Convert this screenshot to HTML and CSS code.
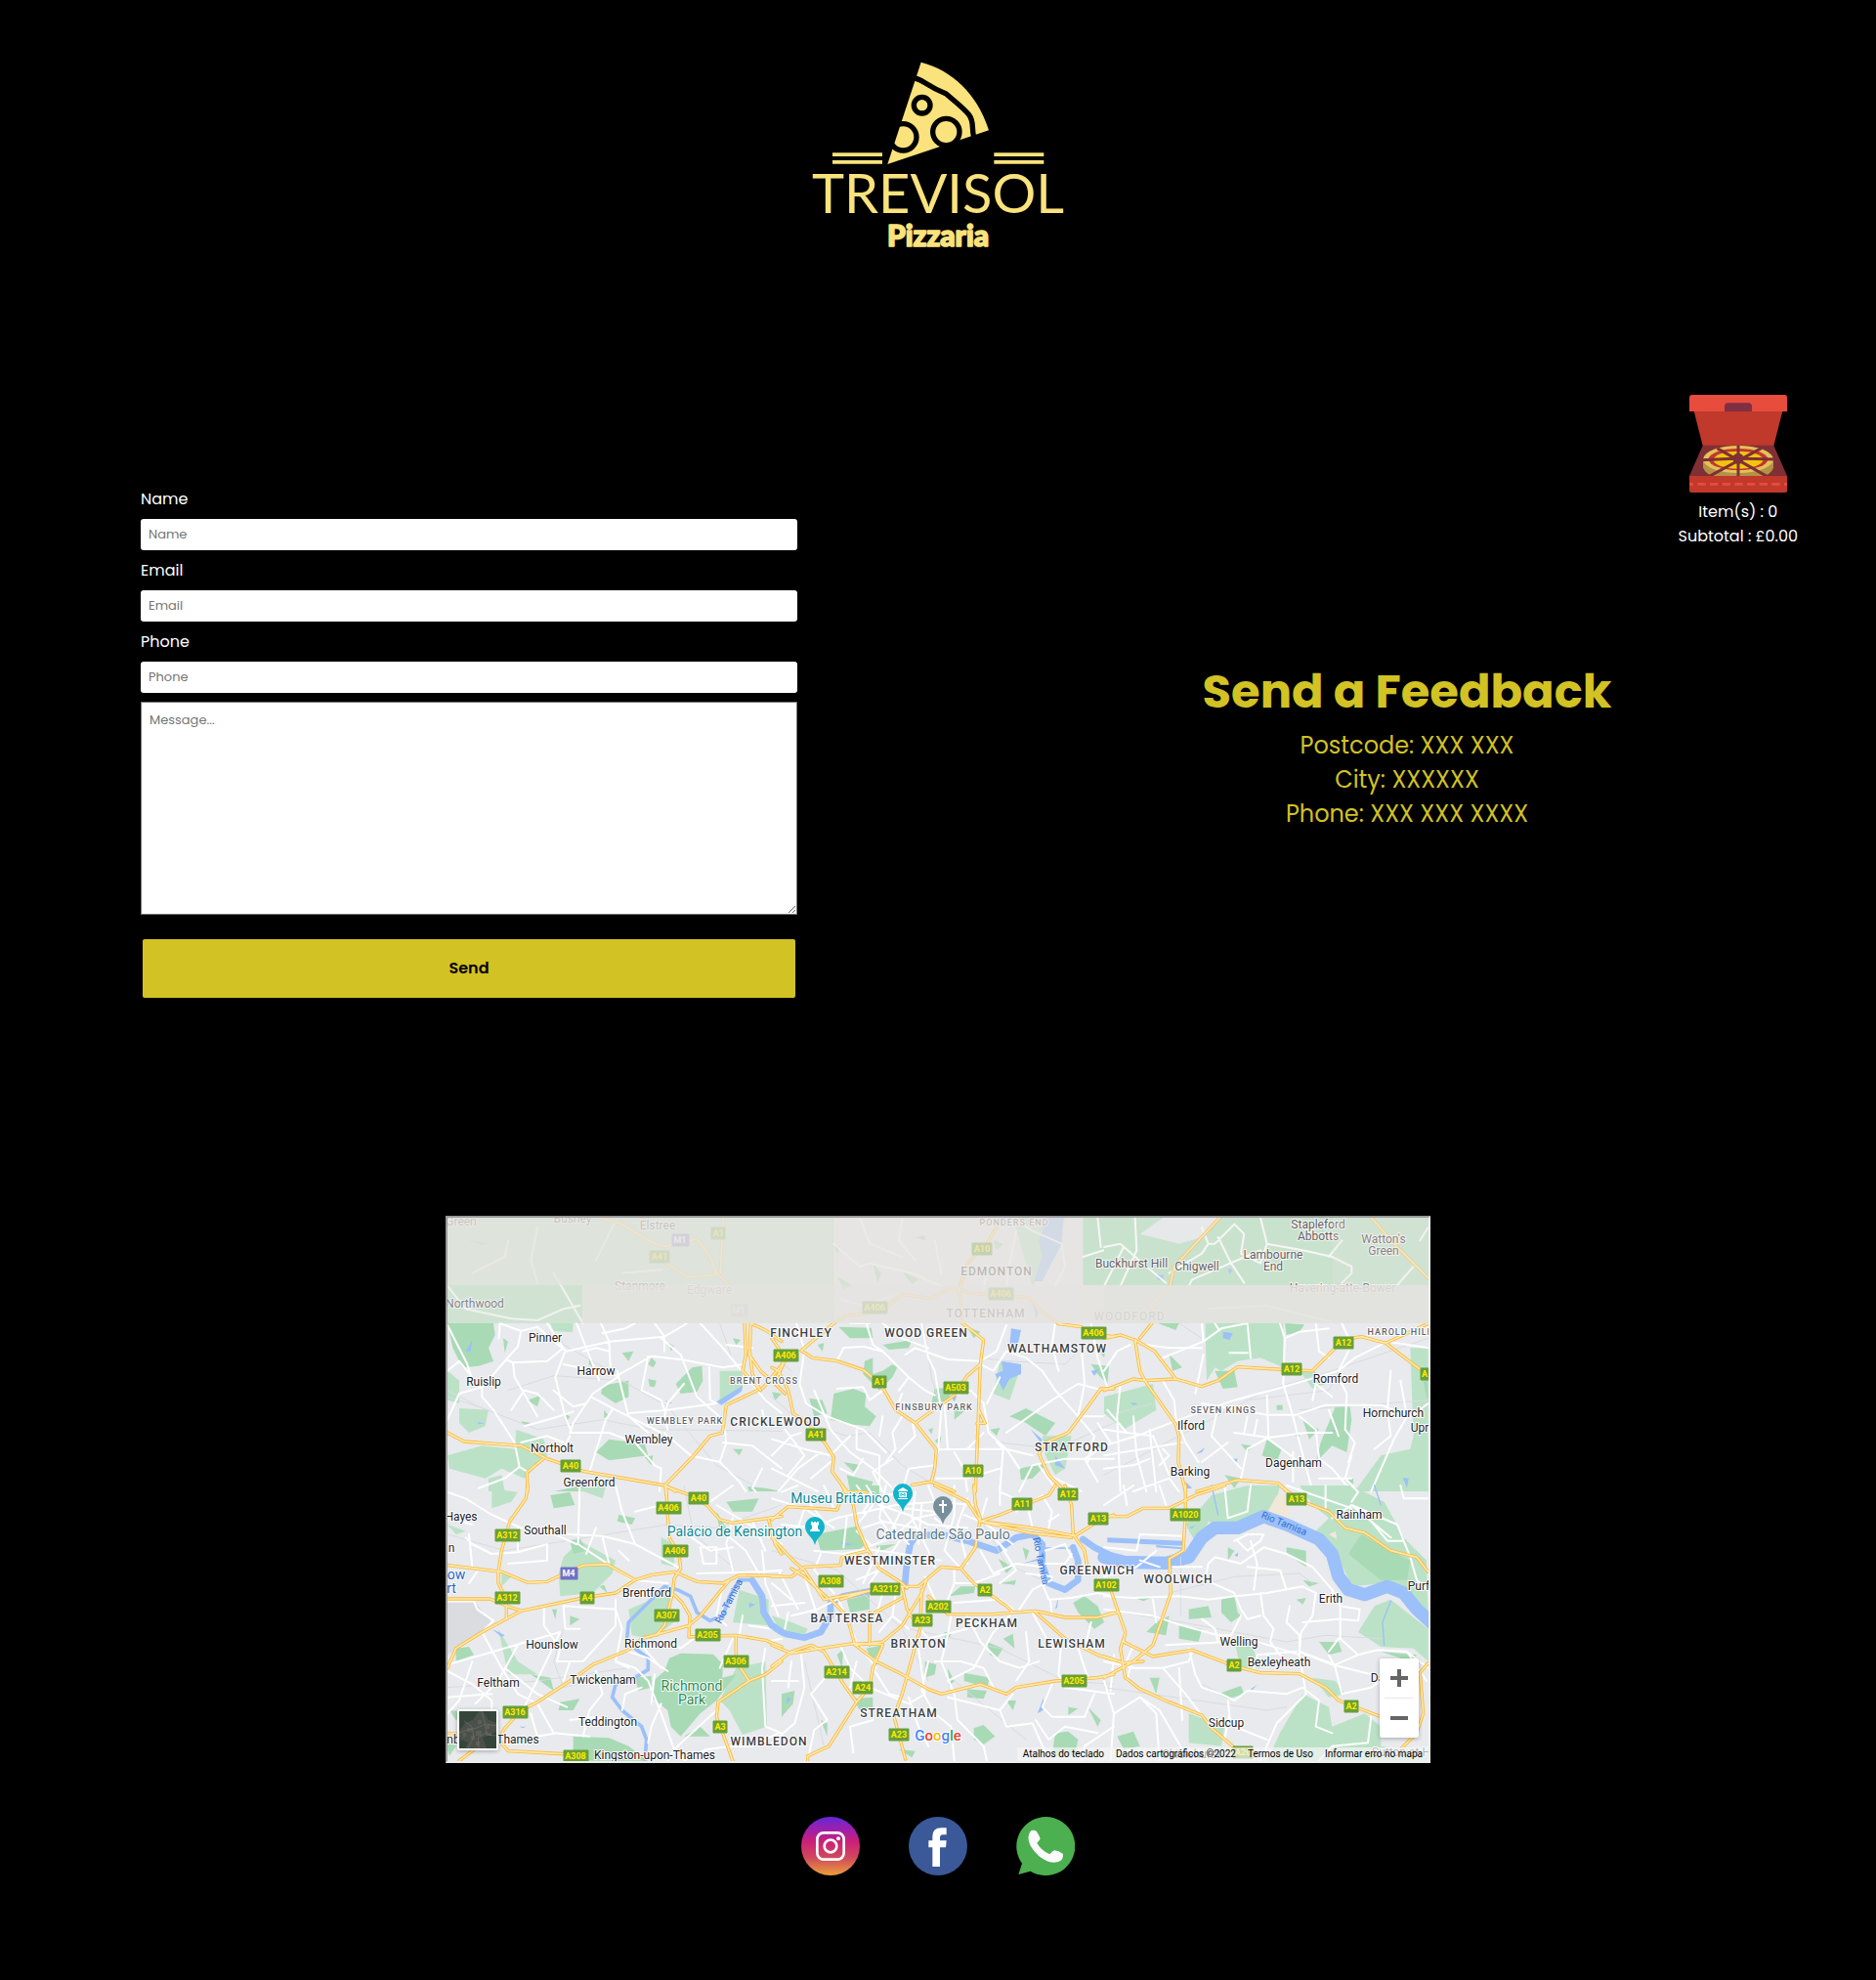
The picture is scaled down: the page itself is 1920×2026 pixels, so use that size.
FILE: index.html
```html
<!DOCTYPE html>
<html lang="en">
<head>
<meta charset="utf-8">
<meta name="viewport" content="width=device-width, initial-scale=1">
<title>Trevisol Pizzaria</title>
<link rel="stylesheet" href="styles.css">
</head>
<body>
<header class="header">
  <a href="#" class="logo-link" aria-label="Trevisol Pizzaria">
    <svg class="logo" viewBox="90 66 780 582">
      <path d="M428 71C520 95 600 165 636 280L325 384Z"/>
      <g class="logo-cut">
        <path d="M408 120C430 122 445 145 505 168C530 190 555 208 575 232C592 255 582 270 590 302"/>
        <circle cx="431" cy="203" r="25"/>
        <circle cx="505" cy="285" r="41"/>
        <circle cx="373" cy="301" r="41"/>
      </g>
      <path d="M156 349h153v11H156zM156 372h153v11H156zM652 349h153v11H652zM652 372h153v11H652z"/>
      <text class="logo-name" x="480" y="534">TREVISOL</text>
      <text class="logo-sub" x="480" y="635">Pizzaria</text>
    </svg>
  </a>
</header>

<main>
  <section class="contact">
    <form class="form">
      <label for="name">Name</label>
      <input id="name" type="text" placeholder="Name">
      <label for="email">Email</label>
      <input id="email" type="email" placeholder="Email">
      <label for="phone">Phone</label>
      <input id="phone" type="tel" placeholder="Phone">
      <textarea aria-label="Message" placeholder="Message..."></textarea>
      <button class="send" type="submit">Send</button>
    </form>
    <div class="feedback">
      <h1>Send a Feedback</h1>
      <p>Postcode: XXX XXX</p>
      <p>City: XXXXXX</p>
      <p>Phone: XXX XXX XXXX</p>
    </div>
    <aside class="cart">
      <svg class="cart-icon" viewBox="117 72 300 300" aria-hidden="true">
        <path fill="#c0392b" d="M131 122H403L376 228H158Z"/>
        <path fill="#e74c3c" d="M117 123V80q0-8 8-8H409q8 0 8 8V123Z"/>
        <path fill="#7f2f42" d="M225 123V108q0-11 11-11H298q11 0 11 11V123Z"/>
        <path fill="#802f34" d="M158 227H376L417 321H117Z"/>
        <path fill="#b39245" d="M159 268V295Q165 312 185 321H350Q370 312 375 295V268Z"/>
        <ellipse fill="#e5c05c" cx="267" cy="270" rx="108" ry="42"/>
        <ellipse fill="#c0392b" cx="267" cy="270" rx="91" ry="33"/>
        <ellipse fill="#f1c40f" cx="267" cy="272" rx="76" ry="27"/>
        <path stroke="#802f34" stroke-width="9" d="M267 227V321M155 272L267 267 380 270M202 236L355 322M338 236L178 322"/>
        <circle fill="#802f34" cx="267" cy="268" r="17"/>
        <path fill="#c0392b" d="M117 321H417V366q0 6-6 6H123q-6 0-6-6Z"/>
        <path stroke="#e74c3c" stroke-width="8" stroke-dasharray="25 13" stroke-dashoffset="13" d="M117 346H417"/>
      </svg>
      <p>Item(s) : 0</p>
      <p>Subtotal : £0.00</p>
    </aside>
  </section>

  <section class="map" aria-label="Map">
    <svg class="map-canvas" viewBox="458 1246 1004 556">
      <defs>
        <g id="trunk">
          <path transform="translate(450 1236) scale(.33333)" d="M24 690L75 717 250 730 330 770 440 808 693 852 725 870M318 770L268 812 270 870M936 354L940 450 930 500 985 560M955 354L952 440 960 510 985 560M955 354L1000 375 1050 410M975 560L880 605 868 690 830 700 780 760 693 850 695 880M950 450L985 500 1030 540 1060 570M1060 470L990 555M490 30L560 50 650 105 690 118 790 95 830 150 850 200 890 240M870 30L862 200M690 165L760 212 850 205"/>
          <path transform="translate(790 1236) scale(.33333)" d="M190 354L230 330 330 320 400 265 490 278 540 250 575 250 610 262 790 275 830 320 880 356 950 365M690 60L660 110 600 170 575 250 585 354 650 405 640 480 625 870M635 620L655 660 630 662M190 354L90 438 125 460 200 470 280 497 320 530 345 560 380 620 440 660 505 742 500 800 490 840 430 850M640 480L600 515 560 575 440 660M0 490L20 500 50 560 65 630 120 670 165 725 190 765 185 810 230 870M0 400L20 430 35 480 10 530M490 840L560 870M1050 555L1010 555 970 610 910 690 840 720 820 755 850 820 900 870M1000 390L1050 395"/>
          <path transform="translate(1130 1236) scale(.33333)" d="M0 400L50 390 95 405 110 500 125 530 220 665 230 700 228 780 250 870M95 405L155 440 220 525 300 548 350 530 410 488 580 498 640 500 700 440 730 405 790 395 865 415 995 355M865 415L995 515M0 560L90 525 125 530 220 525M110 400L150 350 145 295 200 250 215 180 355 30M820 30L900 120 995 215M285 870L410 835 535 845 560 870"/>
          <path transform="translate(450 1520) scale(.33333)" d="M24 245L190 265 270 298 330 295 440 245 515 242 600 290 650 275 720 265 790 295 870 300 920 275 1050 278M270 0L265 40 215 110 190 200 180 265 180 300 205 350 205 405M24 348H155L205 370 250 385M24 560L50 500 130 450 250 385 440 345 540 330 600 290M695 0L700 90 705 160 735 210 740 255 720 285 715 330 690 430 665 460M700 5L770 30 820 60 860 105 900 115 1010 100 1050 95M1010 105L1030 180 1050 210M720 335L745 360 768 400 765 465 820 462 910 460 1000 475 1050 495M890 290L800 400 765 430 620 470 580 505 470 550 400 600 300 665 250 690 200 745 180 780 210 815 400 825M910 460V540L950 600M1050 540L1000 580 950 600 855 665 850 710 880 790 900 845M24 760L120 770M60 845L120 800"/>
          <path transform="translate(790 1520) scale(.33333)" d="M0 105L50 65 200 75 220 20 290 20M215 0L250 60 260 120 290 190 330 255 400 300 415 315M0 160L70 235 100 260 160 350 290 325 400 310 450 310 520 250 580 255 625 190 640 100 625 60 620 0M0 280L60 280 100 250 210 245 215 220 295 200M60 255L100 280 170 345M210 350L310 320M180 350L230 400 255 490 340 480 400 430 460 330 475 290M400 310L415 380 445 430M460 320L455 440 430 530 400 640 375 710 410 840M300 400L400 345M300 390V490M0 490L60 515 150 500 250 485 340 488M0 555L60 510 120 490 160 510 190 560 220 610 260 665 175 800 110 830 110 845M250 485L320 540 400 580 480 625 520 640 640 610 720 640 750 620 870 600 1000 590 1050 580M340 490L310 560 300 620 260 665M580 255L620 300 720 370 740 390M480 340L540 395 680 395 810 385 900 405 1000 405 1050 390M810 390L900 470 1000 520 1050 535M500 0L600 50 640 110 800 130 930 155 1010 105 1050 90M640 110L700 90 850 30 870 0M900 0L920 60 925 150 960 200 970 260M640 110L790 145 920 160"/>
          <path transform="translate(1130 1520) scale(.33333)" d="M250 0V80L243 200 200 225 205 330 150 490 90 540 0 590M0 95L70 95 120 70 200 70 280 30 370 0M540 0L600 45 690 80 740 130 800 145 880 200 960 220 995 265M20 320L65 450 60 480 150 525 270 505 400 555 480 575 600 578 680 620 720 660 845 708M60 470L50 500 65 590 110 625 200 665 300 705 330 745 400 805M0 400L40 390M0 525L60 545 120 540M995 545L970 575 980 700 960 760 910 810"/>
        </g>
      </defs>
      <rect x="458" y="1246" width="1004" height="556" fill="#e8eaed"/>

      <g transform="translate(450 1236) scale(.33333)">
        <path class="park-light" d="M24 30H1050V354H24ZM24 500L60 530 60 600 24 590ZM60 615L150 620 140 670 90 690 60 660ZM235 680L320 710 330 760 260 830 190 800 140 830 30 800 24 760 130 730 230 740ZM860 500L930 500 930 560 860 590ZM150 830L190 820 200 870H150ZM340 354L410 354 408 382 350 378Z"/>
        <path class="park" d="M24 354H165L170 390 150 430 165 470 120 485 70 490 40 430ZM500 545L580 530 580 580 540 600 495 570ZM775 490L805 485 808 530 790 565 740 570 725 540ZM520 710L630 725 640 760 520 775 480 750ZM560 445L595 440 580 470ZM650 460L665 475 655 490 640 480ZM270 590L310 575 300 610ZM350 870L450 850 440 870ZM900 740L930 740 920 760ZM900 400L925 405 910 420ZM1020 565L1050 570 1030 590ZM250 655L280 660 260 668ZM460 455L470 490 458 480ZM505 620L520 640 505 645ZM945 855L1000 860 1050 870 950 870ZM630 765L655 760 650 790ZM380 630L400 640 390 655ZM195 400L210 410 200 445ZM640 525L665 530 660 550 645 548ZM705 415L720 425 710 440Z"/>
        <path class="water" d="M100 405L95 440 80 440ZM850 595L930 545 925 565 865 605ZM115 658L140 660 120 664ZM690 590L715 600 705 600ZM80 95L150 110 130 115Z"/>
        <path class="rail" d="M24 580L120 610 300 680 500 650 650 680 1050 685M210 560L350 515 560 530 700 610 850 790 960 850M330 354L380 420 540 510M860 354L900 470M24 560L140 620"/>
        <path class="road" d="M24 360L85 480 95 510M24 500L60 470 100 520M24 650L60 570 130 550 205 465 240 425 250 378 185 354 182 400M130 550L130 580 165 620 230 720 245 795 270 810M250 378L300 365 350 410 390 440 520 410 690 395 660 354M205 465L225 475 330 470 380 430 330 354M225 475L230 520 300 640M260 670L350 645 410 625M385 440L355 520 385 640 405 690M420 354L470 480 490 530M495 354L520 410 525 500M380 480L545 515 650 455 740 465 870 490 930 480M545 500L560 560 580 640 640 690M545 520L470 570 410 660 400 690 520 690 600 720 660 790 680 800 675 870M465 580L540 620 680 690M680 400L740 450 790 580 870 650M580 630L700 620 850 600 830 590 828 490M460 810L510 650 530 620M800 354L870 430 1000 590 1050 630M870 640L880 720 860 780 920 840 940 870M870 720L960 730 1050 800M24 240L80 310 220 340 300 345 380 310 430 300M350 200L440 354M120 860L200 830 245 795M100 200L200 150 210 100M300 60L280 160 300 230M480 160L540 40M560 200L680 190M690 690L770 760 860 780M640 455L620 560 680 590 690 620M380 740L400 700M350 560L410 610 450 600M990 620L1000 660M350 620L300 570 260 560 220 620M990 800L960 860 970 870M750 540L700 600 690 640 700 680M880 420L960 430M440 440L480 430 520 440M600 354L570 370 500 385M760 354L690 395 690 440M250 720L330 700 380 720"/>
      </g>

      <g transform="translate(790 1236) scale(.33333)">
        <path class="park-light" d="M0 30H190V354H0ZM955 30H1050V237H955ZM700 470L760 500 730 590 680 570ZM830 700L920 700 900 800 870 820 840 760ZM740 30L900 30 880 100 800 240Z"/>
        <path class="park" d="M205 365L305 368 310 400 240 400ZM190 570L250 555 290 570 285 610 320 640 300 670 250 665 180 650ZM115 585L155 590 170 630 130 640ZM285 470L310 460 310 510 340 500 370 480 385 490 370 520 330 560 280 510ZM340 420L430 405 420 430 360 435ZM500 555L560 550 540 590 490 600ZM560 610L595 620 560 650ZM780 615L870 660 840 700 780 660 730 640ZM760 800L850 780 800 830 765 835ZM230 820L310 840 300 870 240 870ZM600 365L640 380 620 400ZM980 480L1035 485 1030 540 1000 510ZM190 110L210 120 200 140ZM310 170L335 200 325 230ZM440 90L470 85 470 100ZM680 100L710 110 690 130ZM220 780L275 790 250 810ZM140 420L160 415 155 440ZM480 680L495 675 490 695ZM200 210L250 240 220 250ZM670 680L700 675 690 700ZM1000 430L1025 430 1020 460ZM400 195L450 220 430 235ZM500 715L520 700 515 730ZM1000 730L1010 720 1010 745Z"/>
        <path class="water" d="M735 370L765 375 755 420 730 420ZM705 470L765 480 765 510 730 525 710 560 685 510 710 500ZM845 30L895 30 890 110 830 225 805 225 830 150 820 100ZM980 500L1005 495 990 515ZM550 580L568 575 560 595ZM795 680L830 710 825 720ZM870 760L900 800 870 790ZM800 290L820 320 810 345Z"/>
        <path class="rail" d="M0 580L80 650 230 700 300 690 400 790 530 870M465 354L490 520 520 620M640 460L720 470 900 480 960 420M700 720L870 740 1050 660M0 450L60 500"/>
        <path class="road" d="M75 354L100 435 85 540 105 600 170 640 280 680 350 750M200 470L220 430 280 425 340 440 420 520 470 560 500 575M290 354L310 420 340 440M460 354L480 460 500 500 520 620 510 750M410 450L440 430 540 465 640 470 690 440 720 360M240 354L300 354M340 354L400 400 480 430M130 560L180 680 240 750 310 800 380 870M0 710L100 740 180 760 240 700M0 800L100 850 140 870M505 742L620 740 720 740 800 760M530 600L540 740M560 575L610 560 650 600 665 690 720 740 760 800M640 480L680 500 720 440 780 460 830 500 870 560 940 640 990 700 970 780M660 600L700 520M720 690L860 590 940 540 1020 560M870 354L860 420 880 500M950 420L960 540 940 640M400 570L380 620M420 520L390 560M340 560L300 590 280 550 200 555M700 870L710 740 690 720M760 870L800 790 900 770 1050 770M850 820L950 870M870 860L820 790M600 870L590 800 560 750M190 110L270 180 300 170 430 200 520 240M270 30L300 110 400 150M400 30L390 100 440 160M210 280L280 300 370 270M740 30L800 70 890 110M890 110L900 180 870 240M1000 30L1010 120M750 70L730 170 720 240M955 150L1050 120M660 200L650 250M940 640L1020 640 1050 620M280 770L250 820 210 800M340 870L310 810 370 770M430 650L440 700 390 750M650 690L600 740M340 640L330 700M980 354L1000 460 1030 550M40 680L100 760 50 820M120 830L180 780M520 200L500 100M1000 660L1040 720 960 770 1000 840M0 760L60 700 90 690M20 870L80 800 150 750M260 680L260 740 330 760 330 870M400 870L420 800 500 790M505 830L600 830 700 800M400 640L370 690 380 740 350 780"/>
      </g>

      <g transform="translate(1130 1236) scale(.33333)">
        <path class="park-light" d="M0 30H1000V354H0ZM310 354H550V490L480 460 410 470 360 500 340 490 315 530ZM940 430L995 430V870H770L850 760 940 740 950 700ZM0 580L150 540 160 620 60 680 0 630ZM600 500L640 495 680 540 640 555Z"/>
        <path class="built" d="M180 30L360 30 300 90 230 110 150 90 110 80Z"/>
        <path class="park" d="M165 354H230L220 375ZM555 354L615 358 600 380 560 390ZM710 610L755 610 760 650 745 750 700 730 650 780 665 720ZM610 650L660 680 630 710ZM500 710L545 740 530 780 485 760ZM340 500L400 500 410 550 365 555ZM530 605H548V620H530ZM580 695L600 690 600 705ZM740 830L765 830 765 850ZM420 725L455 730 440 750ZM200 450L240 490 210 500ZM370 820L420 830 400 860ZM970 490L995 490V600Z"/>
        <path class="water" d="M365 380L395 385 385 405 365 400ZM282 755L310 735 300 750ZM395 770L410 770 405 785ZM160 205L182 205 182 220 165 222ZM380 185L395 190 385 205ZM918 828L935 830 930 860ZM700 680L720 685 705 688ZM80 598L105 600 90 606ZM250 840L270 860 255 862Z"/>
        <path class="rail" d="M230 354L300 400M0 820L230 700 500 560 700 500 995 400M440 590L690 560 720 500M0 640L150 600M600 620L995 590"/>
        <path class="road" d="M0 500L40 440 80 420M300 354L305 410 180 460M305 410L360 370 440 354 450 460M125 420L200 430 300 430M305 450L280 570M385 445H440M540 354L555 400 550 540 580 640 600 720 640 870M555 400L600 380 690 370M650 354L660 440 690 460M730 354L760 420 720 500M0 730L100 700 230 650 400 590 550 550 720 500 770 460 870 410 995 430M180 530L215 590 220 640M220 640L250 720 290 780M500 575L505 710 600 780M400 690L505 705 620 690 700 690M350 610L330 700 420 800M300 600L500 635 590 635 680 605 850 605 940 640M720 520L745 570 740 680 770 720 750 780M880 500L870 620 880 700 830 740M940 640L995 600M910 530L930 640 890 710 820 870M600 640L650 680 660 770 700 800 760 870M420 830L440 740 505 705M580 750L580 840M10 620L70 690 150 700 200 820M50 540L40 640 50 870M90 640L100 760 130 870M140 680L160 870M0 760L240 720M180 740L200 760 170 790M90 870L200 830 230 870M340 354L350 370M50 240L100 130 95 30M0 240L60 120M0 120L50 110 130 180 190 230M200 200L300 140 320 110 340 110 400 50M320 110L300 60M350 90L390 170 430 230M400 50L430 80 420 140 480 170 500 110 610 130 700 150 760 180 760 200 730 230M690 150L730 100M500 110L480 30M260 240L270 220 480 130M900 237L950 180M970 100L995 60M320 310L500 300 700 350M690 620L720 700M660 830L760 830M640 590L650 540 700 580M760 760L740 830 780 870M300 780L380 720M440 640L430 690M470 650L460 700M0 680L70 690M0 800L90 790 140 770"/>
      </g>

      <g transform="translate(450 1520) scale(.33333)">
        <path class="park-light" d="M160 10L240 20 220 50 160 70ZM420 10L510 0 500 40ZM430 170L540 230 530 270 470 330 370 340 365 270 380 220ZM580 380L700 330 720 420 650 470 590 460ZM910 560L1000 540 1005 740 930 765 890 690 860 660ZM920 320L1010 350 1010 430 900 420ZM180 440L240 540 300 580 210 580ZM24 120L80 140 50 150ZM680 160L720 180 720 250 680 240ZM190 270L220 280 190 310Z"/>
        <path class="park" d="M705 530L740 515 840 518 870 550 868 590 910 580 850 660 800 700 740 770 710 740 700 690 650 650 655 600 690 570ZM410 770L520 775 580 800 640 845H410ZM50 500L90 495 105 520 50 540ZM370 665L430 655 410 690 365 690ZM550 90L600 100 590 120 545 110ZM880 50L980 40 960 80 900 80ZM340 30L400 20 415 60 350 70ZM600 590L650 585 650 620 610 630ZM30 690L90 695 50 720ZM750 770L800 740 830 770ZM400 170L430 160 450 200 410 210ZM400 400L430 410 400 430ZM280 580L340 590 350 630ZM490 310L505 305 515 330ZM345 380L360 380 355 410ZM10 770L50 800 30 830ZM850 80L880 130 860 140Z"/>
        <path class="river" d="M575 470L580 420 640 360 690 310 730 320 770 340 790 390 830 415 870 400 890 340 920 290 960 290M600 500L640 530 640 565 600 590 540 610 530 650 560 690 620 740 635 780 630 845"/>
        <path class="river wide" d="M960 292L990 340 995 390 1020 430 1050 450"/>
        <path class="water" d="M160 440L200 460 190 465ZM950 360L970 365 950 375ZM245 740L265 740 255 745Z"/>
        <path class="airport" d="M24 360H110L160 420 100 470 24 520Z"/>
        <path class="rail" d="M24 150L200 200 450 160 700 120 850 130 1050 60M24 620L300 600 580 560M380 440L350 540 380 620 500 590M750 0L780 150 900 250"/>
        <path class="road" d="M24 20L80 40 160 90 250 130 400 150 500 155 600 180 740 255M90 150L100 250M80 160L100 180 160 210 240 205 330 180 330 230 210 240M430 0L425 180 500 230 590 290M420 180L330 140M500 160L520 240M540 0L560 80 600 180M24 355H105L115 380 165 415 130 450M115 265L90 300M130 450L190 560 240 640 300 670 350 760 460 770M24 550L130 520 370 450M24 570L100 610 160 660 160 700M110 670L180 600 240 490M320 370L320 430 370 500 360 540 440 540 540 430 540 350M370 450L260 680M200 560L300 640 390 680M380 370L385 440 430 440M380 370L540 380 560 440 540 540 580 560M580 510L640 530 700 570M540 540L600 560 640 600 680 700 720 810 700 845M720 810L850 690M500 640L480 570M500 640L460 690 440 770M610 480L680 560M620 620L570 640 560 690M400 720L480 710 560 740M680 670L650 740 640 790M660 580L650 670M830 50L900 0M850 60L1050 180M800 190H850V240H810ZM790 270L990 265 1050 260M990 200L1000 300 1040 400M930 400L920 460M950 430L1050 445M900 470L860 560M1000 500L990 560 1000 740 1050 760M870 300L850 400 880 430M24 650L160 640M280 700L300 770 290 790M300 770L360 760M100 540L60 660 24 700M780 470L740 500 700 480M590 290L700 300M450 210L480 130M880 150L940 200 980 270M600 80L680 60M24 100L100 120M240 130V200M380 600L400 540M1000 480L1050 470M900 800L820 810 750 845M1040 760L960 800 900 800M550 200L580 230M760 150L830 200 900 190M900 100L880 180 900 260M960 110L1000 200"/>
      </g>

      <g transform="translate(790 1520) scale(.33333)">
        <path class="park-light" d="M0 400L60 420 110 440 100 460 30 460Z"/>
        <path class="park" d="M135 150L260 125 290 180 270 195 150 200ZM230 350L300 335 300 380 240 390ZM470 540L505 550 500 580 470 590ZM925 360L960 340 1000 370 1020 420 990 440 940 390ZM600 625L660 630 650 655 600 650ZM695 225L740 250 720 270ZM660 480L710 500 690 530 670 520ZM710 470L740 455 745 500ZM290 500L340 490 310 540ZM620 745L650 735 685 770 650 795 620 780ZM870 760L910 755 940 780 930 830 860 830ZM30 640L70 630 65 670 30 710ZM545 340L580 310 625 310 620 330ZM200 520L220 500 215 560ZM530 450L555 450 530 490ZM150 720L170 730 170 770ZM390 810L440 815 430 835ZM590 575L670 590 660 620 590 600ZM540 560L560 600 545 615ZM970 680L1010 720 1000 740ZM700 300L750 290 745 305ZM770 190L790 200 780 230ZM320 185L380 180 330 205ZM240 0L330 0 330 30 290 20ZM200 20L225 0ZM910 680L940 685 910 705ZM250 655L310 650 310 690 270 690ZM720 660L750 660 740 690Z"/>
        <path class="river wide" d="M0 430L40 455 100 467 150 450 180 400 180 360 220 340 300 325M408 310L415 230 425 180 440 155 520 150 600 170 690 200 750 160 800 150 830 180 830 240 850 300 900 320 940 290 940 230 925 190"/>
        <path class="river wide" d="M955 165L990 190 1050 220"/>
        <path class="water" d="M60 655L45 650 45 670ZM205 175L250 180 230 185ZM820 190H920V194H820ZM770 240L830 220V228ZM880 340L870 380 876 375ZM815 700L835 650 832 690Z"/>
        <path class="rail" d="M0 200L200 260 400 440 480 600M420 440L700 500 900 600 1050 610M100 540L160 800M650 120L720 240 830 290M560 600L780 780"/>
        <path class="road" d="M0 40L100 70 190 130M30 120L120 130 200 100 290 80 380 60 500 50 620 60M130 200L220 210 290 195 400 210 520 230M20 260L60 340 80 380M160 0L190 70M290 0L330 60 420 90 480 120 600 130M350 0L330 100 370 160M400 70L370 130 420 180M440 20L430 100 480 200 500 250M560 0L560 90 530 200 580 255M280 130L340 110 440 130M310 30L380 130M290 190L370 160 440 100 540 80M460 60L450 180M600 40L570 120 600 240M400 160L350 230 300 300M640 200L680 270 750 240 830 250M700 180L750 260 700 300M660 120L740 180M700 60L700 0M750 80L830 30 860 80 850 130M780 40L800 130M840 240L900 240 920 210M840 200L900 180 920 220M780 270L860 280M830 300L850 350 920 345 1000 330 1050 340M855 350L860 400M730 400L680 450 620 560 540 600M540 350L560 300 620 300 700 270M470 280L500 350 550 400 540 460 520 540 560 640 570 720 650 800 660 845M740 380L700 350 560 360M780 450L790 540 750 600M890 470L880 580 900 620 1050 640M800 390L860 500M500 540L580 540 650 560 680 620M480 540L460 630 500 700 550 740 560 845M450 500L470 640M540 650L620 670 700 690 740 640M700 690L720 740 800 730 840 820M810 720L850 780 900 740 1000 760M860 610L830 680 860 710 960 710 990 640M1050 520L1040 630M1050 740L960 800 950 845M100 280L140 400M0 300L60 350M150 210L130 260 190 330M60 400L140 380 200 350M0 370L100 360M50 390L40 440M200 340L260 480 320 560M90 520L100 620 70 730 0 790M60 540L50 620M190 560L120 640 170 720 130 750 110 845M210 490L240 560 300 620M260 540L240 620M310 560L360 640 400 650M300 620L420 670 470 640M310 720L240 740 250 820M420 650L450 740 480 800M260 290L330 260M330 190L280 300M160 110L120 60M230 100L220 190M260 140L300 180M80 600L0 600M420 400L480 470 600 440M600 400L640 480 700 540 760 560 820 540M340 330L320 400M380 330L370 400 330 450M370 400L420 440M980 420L960 500M560 260L560 300M100 70L80 130M500 100L540 130M590 90L640 110M660 40L640 110M880 90L850 110M940 500L970 590M30 20L80 0M760 380L800 320 860 290M260 0L300 50 280 80M380 0L400 70 500 80M310 60L270 110M480 0L500 50M340 30L440 20M700 20L770 50M670 150L720 200"/>
      </g>

      <g transform="translate(1130 1520) scale(.33333)">
        <path class="park-light" d="M250 120L330 30 440 0H540L520 90 400 140 320 110 290 190ZM600 0H760L860 50 920 160 990 230 995 410 860 300 760 310 720 220 680 160 640 150 690 100 640 60ZM830 370L880 350 995 440V540L950 500 850 495 780 450ZM610 640L690 680 700 740 800 700 850 740V800L995 820V845H500L540 760ZM640 590L710 600 740 640 690 650ZM260 700L370 740 360 800 260 790ZM400 480L450 480 480 560 420 560Z"/>
        <path fill="#f1e8d9" d="M530 30L560 30 570 100 500 85ZM690 150L710 140 715 165Z"/>
        <path class="park" d="M790 150L860 190 940 230 930 290 850 290 750 210ZM560 190L620 200 620 250 560 210ZM360 350L400 340 410 390 420 400 390 420 360 390ZM260 380L320 370 330 405 260 410ZM160 420L200 400 190 460 130 450ZM230 430L300 440 290 480 230 470ZM95 345L145 345 120 355ZM350 640L420 615 430 640 380 655ZM40 770L90 755 110 800 60 810ZM610 290L660 300 630 310ZM660 480L720 480 730 510 690 520ZM60 240L100 220 80 250ZM380 190L400 200 380 230ZM140 590L170 590 160 640ZM590 350L620 345 610 365ZM850 510L960 520 940 540Z"/>
        <path class="river broad" d="M0 220L60 235 190 238 260 220 300 160 340 130 410 130 490 95 560 120 660 165 700 210 720 280 750 320 800 335 870 310 920 330 960 380 1010 425"/>
        <path class="river thin" d="M880 355L855 420 860 490M830 0L850 60M330 0L350 90"/>
        <path class="water" d="M10 160L240 170V185L10 175ZM160 183L240 190V196L160 190ZM400 215L412 205 410 218ZM450 625L470 612 455 628ZM260 130L280 122 270 132Z"/>
        <path class="rail" d="M235 220V400M0 380L240 420 560 480 680 460 850 470M200 330L400 280 600 270 640 300M0 620L500 690 560 680M300 610L400 660"/>
        <path class="road" d="M0 340L90 345 230 340 320 350 400 340 500 330 610 310 650 330M320 240L340 220 420 240 490 190 560 210 640 250 700 320 725 370 725 470 780 520 840 505 930 510 995 560M320 240L310 290 400 330 420 380 440 410 480 400M400 170L440 150 490 150 480 170 440 200 410 170M450 170L470 240 460 320M440 250L540 260 560 320M0 280L100 250 160 200M0 190L100 200 110 150 240 155M0 60L90 0M60 0L70 60M170 0L190 60M370 0L380 100 440 80 450 0M0 380L150 400 240 430 350 460 390 460 420 400M300 410L340 440 350 480M570 370L560 420 600 460 600 530M650 330L640 400 605 450 600 510 700 550 820 580M610 420L720 410 780 415 785 380 725 370M460 560L470 520 590 510M480 330L490 400 520 440 510 480 540 520M400 480L440 470 600 520 620 640 530 730 480 845M0 600L30 700 20 845M30 700L110 650 170 690 240 810M110 650L160 700 170 845M70 600L80 560 180 560 260 540 270 510M180 560L250 640 330 745M260 500L280 580 300 620 360 640 400 660 440 630 560 640 610 620 660 660 650 740 700 760M370 780L385 700 380 660M385 710L400 740 500 780M190 490L380 480M690 520L710 560 730 640 820 620 850 600M780 520L710 550 600 510M720 470L690 510M820 710L810 790 700 800 660 845M930 510L990 600M760 0L780 20 760 50M700 100L760 60 900 120 940 220M760 60L880 160M680 0L680 70M820 110L870 170 920 170M910 0L920 40H995M940 220L960 290 995 320M560 0L760 70M100 560L0 540M230 560L240 720M170 250L110 230M210 250L300 250M150 350L160 420M90 490L60 560"/>
      </g>

      <use class="trunk-case" href="#trunk"/>
      <use class="trunk-core" href="#trunk"/>

      <g class="shields">
        <path d="M574 1494h20v12h-20zM665 1280h20v12h-20zM728 1256h14v12h-14zM995 1272h20v12h-20zM1012 1318h25v12h-25zM883 1332h25v12h-25zM792 1381h25v12h-25zM893 1408h14v12h-14zM966 1414h25v12h-25zM1107 1358h25v12h-25zM825 1462h20v12h-20zM986 1499h20v12h-20zM1365 1368h20v12h-20zM1312 1395h20v12h-20zM1454 1400h20v12h-20zM705 1527h20v12h-20zM672 1537h25v12h-25zM679 1581h25v12h-25zM507 1565h25v12h-25zM507 1629h25v12h-25zM594 1629h14v12h-14zM670 1647h25v12h-25zM712 1667h25v12h-25zM741 1694h25v12h-25zM515 1746h25v12h-25zM730 1761h14v12h-14zM577 1791h25v12h-25z"/>
        <path d="M1036 1533h20v12h-20zM1083 1523h20v12h-20zM1114 1548h20v12h-20zM838 1612h25v12h-25zM891 1620h30v12h-30zM1001 1621h14v12h-14zM948 1638h25v12h-25zM934 1652h20v12h-20zM1120 1616h25v12h-25zM844 1705h25v12h-25zM873 1721h20v12h-20zM1087 1714h25v12h-25zM910 1769h20v12h-20zM1317 1528h20v12h-20zM1198 1544h30v12h-30zM1256 1698h14v12h-14zM1376 1740h14v12h-14zM1262 1787h20v12h-20z"/>
        <path class="motorway" d="M688 1263h17v12h-17zM748 1335h17v12h-17zM574 1604h17v12h-17z"/>
        <text x="584" y="1503">A40</text><text x="675" y="1289">A41</text><text x="735" y="1265">A1</text><text x="1005" y="1281">A10</text><text x="1024" y="1327">A406</text><text x="895" y="1341">A406</text><text x="804" y="1390">A406</text><text x="900" y="1417">A1</text><text x="978" y="1423">A503</text><text x="1119" y="1367">A406</text><text x="835" y="1471">A41</text><text x="996" y="1508">A10</text><text x="1375" y="1377">A12</text><text x="1322" y="1404">A12</text><text x="1458" y="1409">A</text>
        <text x="715" y="1536">A40</text><text x="684" y="1546">A406</text><text x="691" y="1590">A406</text><text x="519" y="1574">A312</text><text x="519" y="1638">A312</text><text x="601" y="1638">A4</text><text x="682" y="1656">A307</text><text x="724" y="1676">A205</text><text x="753" y="1703">A306</text><text x="527" y="1755">A316</text><text x="737" y="1770">A3</text><text x="589" y="1800">A308</text>
        <text x="1046" y="1542">A11</text><text x="1093" y="1532">A12</text><text x="1124" y="1557">A13</text><text x="850" y="1621">A308</text><text x="906" y="1629">A3212</text><text x="1008" y="1630">A2</text><text x="960" y="1647">A202</text><text x="944" y="1661">A23</text><text x="1132" y="1625">A102</text><text x="856" y="1714">A214</text><text x="883" y="1730">A24</text><text x="1099" y="1723">A205</text><text x="920" y="1778">A23</text><text x="1327" y="1537">A13</text><text x="1213" y="1553">A1020</text><text x="1263" y="1707">A2</text><text x="1383" y="1749">A2</text><text x="1272" y="1796">A20</text>
        <g class="on-motorway"><text x="696" y="1272">M1</text><text x="756" y="1344">M1</text><text x="582" y="1613">M4</text></g>
      </g>

      <g class="town">
        <text x="472" y="1254">Green</text><text x="586" y="1251">Bushey</text><text x="673" y="1258">Elstree</text><text x="655" y="1320">Stanmore</text><text x="726" y="1324">Edgware</text><text x="486" y="1338">Northwood</text><text x="558" y="1373">Pinner</text><text x="610" y="1407">Harrow</text><text x="495" y="1418">Ruislip</text><text x="664" y="1477">Wembley</text><text x="565" y="1486">Northolt</text><text x="603" y="1521">Greenford</text>
        <text x="1158" y="1297">Buckhurst Hill</text><text x="1225" y="1300">Chigwell</text><text x="1349" y="1257">Stapleford</text><text x="1349" y="1269">Abbotts</text><text x="1303" y="1288">Lambourne</text><text x="1303" y="1300">End</text><text x="1416" y="1272">Watton's</text><text x="1416" y="1284">Green</text><text x="1374" y="1322">Havering-atte-Bower</text><text x="1367" y="1415">Romford</text><text x="1426" y="1450">Hornchurch</text><text x="1453" y="1465">Upr</text><text x="1219" y="1463">Ilford</text><text x="1324" y="1501">Dagenham</text><text x="1218" y="1510">Barking</text>
        <text x="472" y="1556">Hayes</text><text x="462" y="1588">n</text><text x="558" y="1570">Southall</text><text x="662" y="1634">Brentford</text><text x="565" y="1687">Hounslow</text><text x="666" y="1686">Richmond</text><text x="510" y="1726">Feltham</text><text x="617" y="1723">Twickenham</text><text x="622" y="1766">Teddington</text><text x="530" y="1784">Thames</text><text x="464" y="1784">nb</text><text x="670" y="1800">Kingston-upon-Thames</text>
        <text x="1391" y="1554">Rainham</text><text x="1452" y="1627">Purf</text><text x="1362" y="1640">Erith</text><text x="1268" y="1684">Welling</text><text x="1309" y="1705">Bexleyheath</text><text x="1410" y="1721">Da</text><text x="1255" y="1767">Sidcup</text><text x="1219" y="1799">Chislehurst</text><text x="1434" y="1797">Sutton at H</text>
      </g>
      <g class="district">
        <text x="1020" y="1305">EDMONTON</text><text x="1009" y="1348">TOTTENHAM</text><text x="1156" y="1351">WOODFORD</text><text x="820" y="1368">FINCHLEY</text><text x="948" y="1368">WOOD GREEN</text><text x="1082" y="1384">WALTHAMSTOW</text><text x="794" y="1459">CRICKLEWOOD</text><text x="1097" y="1485">STRATFORD</text><text x="787" y="1786">WIMBLEDON</text><text x="911" y="1601">WESTMINSTER</text><text x="867" y="1660">BATTERSEA</text><text x="1010" y="1665">PECKHAM</text><text x="940" y="1686">BRIXTON</text><text x="1097" y="1686">LEWISHAM</text><text x="920" y="1757">STREATHAM</text><text x="1123" y="1611">GREENWICH</text><text x="1206" y="1620">WOOLWICH</text>
      </g>
      <g class="district suburb">
        <text x="1038" y="1254">PONDERS END</text><text x="701" y="1457">WEMBLEY PARK</text><text x="782" y="1416">BRENT CROSS</text><text x="956" y="1443">FINSBURY PARK</text><text x="1252" y="1446">SEVEN KINGS</text><text x="1433" y="1366">HAROLD HILL</text>
      </g>
      <g class="place">
        <text x="860" y="1538" fill="#0b8793">Museu Britânico</text><text x="752" y="1572" fill="#0b8793">Palácio de Kensington</text><text x="965" y="1575" fill="#5b7583">Catedral de São Paulo</text>
        <text x="708" y="1730" fill="#2b8a4f">Richmond</text><text x="708" y="1744" fill="#2b8a4f">Park</text>
        <text x="467" y="1616" fill="#2463c7">ow</text><text x="462" y="1630" fill="#2463c7">rt</text>
      </g>
      <g class="stream">
        <text transform="translate(749 1640) rotate(-63)">Rio Tamisa</text><text transform="translate(1062 1598) rotate(78)">Rio Tamisa</text><text transform="translate(1313 1562) rotate(22)">Rio Tamisa</text>
      </g>
      <g class="pins">
        <path fill="#12b5cb" d="M924 1547C922 1538 914 1536 914 1528A10 10 0 0 1 934 1528C934 1536 926 1538 924 1547ZM834 1581C832 1572 824 1570 824 1562A10 10 0 0 1 844 1562C844 1570 836 1572 834 1581Z"/>
        <path fill="#78909c" d="M965 1560C963 1551 955 1549 955 1541A10 10 0 0 1 975 1541C975 1549 967 1551 965 1560Z"/>
        <path fill="#fff" d="M924 1522L929 1525V1526H919V1525ZM920 1527H928V1532H920ZM919 1533H929V1534H919ZM830 1557H832V1558H833V1557H835V1558H836V1557H838V1560L837 1561V1564L839 1566V1567H829V1566L831 1564V1561L830 1560ZM964 1535H966V1539H969V1541H966V1548H964V1541H961V1539H964Z"/>
        <path fill="none" stroke="#12b5cb" d="M922 1531V1528L924 1530 926 1528V1531"/>
      </g>
      <g fill="#e5e3df">
        <path opacity=".84" d="M458 1246H852V1315H458Z"/>
        <path opacity=".74" d="M852 1246H1108V1315H852Z"/>
        <path opacity=".32" d="M1108 1246H1364V1315H1108Z"/>
        <path opacity=".5" d="M1364 1246H1462V1315H1364ZM458 1315H596V1354H458Z"/>
        <path opacity=".95" d="M596 1315H852V1354H596Z"/>
        <path opacity=".85" d="M852 1315H1108V1354H852Z"/>
        <path opacity=".92" d="M1108 1315H1462V1354H1108Z"/>
      </g>
      <text class="google" x="960" y="1781"><tspan fill="#4285f4">G</tspan><tspan fill="#ea4335">o</tspan><tspan fill="#fbbc04">o</tspan><tspan fill="#4285f4">g</tspan><tspan fill="#34a853">l</tspan><tspan fill="#ea4335">e</tspan></text>
    </svg>
    <button class="satellite" type="button" aria-label="Satellite view">
      <svg viewBox="0 0 38 38">
        <rect width="38" height="38" fill="#4b514a"/>
        <path fill="#35453a" d="M0 0H20L14 9 6 12 0 20ZM24 0H38V12L30 9ZM0 28L9 32 6 38H0ZM24 27L38 21V38H28Z"/>
        <path fill="#5c5d54" d="M8 17H13V21H8ZM17 20H23V25H17ZM27 14H31V18H27ZM12 25H16V29H12ZM4 22H7V26H4ZM19 9H23V13H19ZM28 22H33V25H28ZM17 31H21V35H17Z"/>
        <path fill="none" stroke="#74736a" stroke-width=".6" d="M0 22L9 19 18 17 27 13 38 15M23 0L26 11 28 24 38 25M9 38L15 26 13 16 5 10M20 38L19 27 29 21"/>
      </svg>
    </button>
    <div class="zoom">
      <button type="button" aria-label="Zoom in"><svg viewBox="0 0 18 18"><path d="M7 0h4v7h7v4h-7v7H7v-7H0V7h7z"/></svg></button>
      <button type="button" aria-label="Zoom out"><svg viewBox="0 0 18 18"><path d="M0 7h18v4H0z"/></svg></button>
    </div>
    <nav class="credits" aria-label="Map information">
      <a href="#">Atalhos do teclado</a>
      <a href="#">Dados cartográficos ©2022</a>
      <a href="#">Termos de Uso</a>
      <a href="#">Informar erro no mapa</a>
    </nav>
  </section>
</main>

<footer class="social">
  <a href="#" aria-label="Instagram">
    <svg viewBox="60 57 180 180">
      <defs><linearGradient id="sunset" x1="0" y1="0" x2="0" y2="1"><stop offset="0" stop-color="#6228d7"/><stop offset=".2" stop-color="#9a20ae"/><stop offset=".42" stop-color="#cb1f78"/><stop offset=".7" stop-color="#d04a5c"/><stop offset="1" stop-color="#eba03a"/></linearGradient></defs>
      <circle cx="150" cy="147" r="90" fill="url(#sunset)"/>
      <g fill="none" stroke="#fff" stroke-width="8"><rect x="109" y="106" width="82" height="82" rx="20"/><circle cx="150" cy="147" r="19"/></g>
      <circle cx="174" cy="124" r="6" fill="#fff"/>
    </svg>
  </a>
  <a href="#" aria-label="Facebook">
    <svg viewBox="390 57 180 180">
      <circle cx="480" cy="147" r="90" fill="#3b5998"/>
      <path fill="#fff" d="M463 210V151H451V130H463V117Q463 91 490 91H506V112H495Q486 112 486 121V130H506L504 151H486V210Z"/>
    </svg>
  </a>
  <a href="#" aria-label="WhatsApp">
    <svg viewBox="720 57 180 180">
      <path fill="#4caf50" d="M727 234L738 200A90 90 0 1 1 764 224Z"/>
      <path fill="#fafafa" d="M766 99Q776 96 782 101Q790 112 794 124Q793 130 784 137Q794 158 823 172Q832 162 837 160Q850 161 864 171Q865 184 858 191Q840 202 818 194Q785 181 764 146Q750 116 766 99Z"/>
    </svg>
  </a>
</footer>
</body>
</html>
```
FILE: styles.css
```css
* {
  box-sizing: border-box;
  margin: 0;
  padding: 0;
}

body {
  background: #000;
  color: #fff;
  font-family: Poppins, Inter, sans-serif;
  font-size: 16px;
}

svg {
  display: block;
}

/* Header */
.header {
  display: flex;
  justify-content: center;
  padding: 62px 16px 148px;
}

.logo {
  width: 260px;
  height: 194px;
  fill: #fae27c;
}

.logo-cut {
  fill: none;
  stroke: #000;
  stroke-width: 16px;
}

.logo-name,
.logo-sub {
  font-family: Lato, sans-serif;
  text-anchor: middle;
}

.logo-name {
  font-size: 168px;
}

.logo-sub {
  font-size: 90px;
  font-weight: 900;
  stroke: #fae27c;
  stroke-width: 5px;
  stroke-linejoin: round;
}

/* Contact */
.contact {
  display: grid;
  grid-template-columns: 1fr 1fr;
}

.form {
  grid-area: 1 / 1;
  justify-self: center;
  width: 70%;
  padding-top: 95px;
  display: flex;
  flex-direction: column;
}

.form label {
  line-height: 24px;
  margin-bottom: 8px;
}

.form input {
  height: 32px;
  margin-bottom: 9px;
  padding: 0 8px;
  border: 0;
  border-radius: 3px;
  background: #fff;
  font: 13px Poppins, Inter, sans-serif;
}

.form textarea {
  height: 218px;
  padding: 8px;
  border: 1px solid #767676;
  background: #fff;
  font: 13px Poppins, Inter, sans-serif;
  resize: vertical;
}

.form ::placeholder {
  color: #757575;
}

.send {
  height: 60px;
  margin: 25px 2px 0;
  padding-bottom: 2px;
  border: 0;
  border-radius: 2px;
  background: #d2c224;
  color: #000;
  font: 600 16px Poppins, Inter, sans-serif;
}

.feedback {
  grid-area: 1 / 2;
  align-self: center;
  padding-top: 96px;
  color: #d2c224;
  text-align: center;
  font-size: 24px;
  line-height: 35px;
}

.feedback h1 {
  font-size: 48px;
  line-height: 74px;
}

.cart {
  grid-area: 1 / 2;
  place-self: start end;
  margin-right: 80px;
  text-align: center;
  line-height: 25px;
}

.cart-icon {
  width: 100px;
  height: 100px;
  margin: 0 auto 7px;
}

/* Map */
.map {
  position: relative;
  width: 52.5%;
  margin: 223px auto 0;
  border: 2px inset #eee;
}

.map-canvas {
  width: 100%;
  font-family: Roboto, sans-serif;
  text-anchor: middle;
}

.park { fill: #a8dab5; }
.park-light { fill: #bbe2c6; }
.built { fill: #e8eaed; }
.airport { fill: #dadce0; }
.water { fill: #9cc0f9; }

.river,
.rail,
.road,
.trunk-case,
.trunk-core {
  fill: none;
  stroke-linejoin: round;
  stroke-linecap: round;
}

.river { stroke: #9cc0f9; stroke-width: 11px; }
.river.thin { stroke-width: 4px; }
.river.wide { stroke-width: 20px; }
.river.broad { stroke-width: 40px; }
.rail { stroke: #d9dbe0; stroke-width: 3px; }
.road { stroke: #fff; stroke-width: 6px; }
.trunk-case { stroke: #f9b93b; stroke-width: 10px; }
.trunk-core { stroke: #ffe9ae; stroke-width: 5px; }

.shields path {
  fill: #689f38;
  stroke: #689f38;
  stroke-linejoin: round;
}

.shields .motorway {
  fill: #7070c8;
  stroke: #7070c8;
}

.shields text {
  fill: #ffeb00;
  font-size: 9px;
  font-weight: 700;
}

.shields .on-motorway text {
  fill: #fff;
}

.town,
.district,
.place {
  paint-order: stroke;
  stroke: #fff;
  stroke-width: 2px;
  stroke-linejoin: round;
}

.town {
  fill: #202124;
  font-size: 12px;
}

.district {
  fill: #3c4043;
  font-size: 12px;
  font-weight: 500;
  letter-spacing: 1px;
}

.suburb {
  fill: #5f6368;
  font-size: 9px;
}

.place {
  font-size: 14px;
}

.stream {
  fill: #2d6fd2;
  font-size: 10px;
}

.google {
  font-size: 15px;
  font-weight: 500;
  paint-order: stroke;
  stroke: #fff;
  stroke-width: 2px;
}

.satellite {
  position: absolute;
  left: 10px;
  bottom: 11px;
  width: 42px;
  height: 42px;
  border: 2px solid #fff;
  border-radius: 2px;
  box-shadow: 0 1px 4px rgba(0, 0, 0, .3);
}

.zoom {
  position: absolute;
  right: 10px;
  bottom: 24px;
  width: 40px;
  border-radius: 2px;
  background: #fff;
  box-shadow: 0 1px 4px rgba(0, 0, 0, .3);
}

.zoom button {
  display: grid;
  place-items: center;
  width: 30px;
  height: 40px;
  margin: 0 auto;
  border: 0;
  background: none;
}

.zoom button + button {
  height: 41px;
  border-top: 1px solid #e6e6e6;
}

.zoom svg {
  width: 18px;
  height: 18px;
  fill: #666;
}

.credits {
  position: absolute;
  right: 0;
  bottom: 0;
  display: flex;
  gap: 12px;
  padding: 0 6px;
  background: rgba(245, 245, 245, .7);
  font: 10px/14px Roboto, sans-serif;
}

.credits a {
  color: #000;
  text-decoration: none;
}

/* Footer */
.social {
  display: flex;
  justify-content: center;
  gap: 50px;
  padding: 55px 16px 107px;
}

.social svg {
  width: 60px;
  height: 60px;
}
```
